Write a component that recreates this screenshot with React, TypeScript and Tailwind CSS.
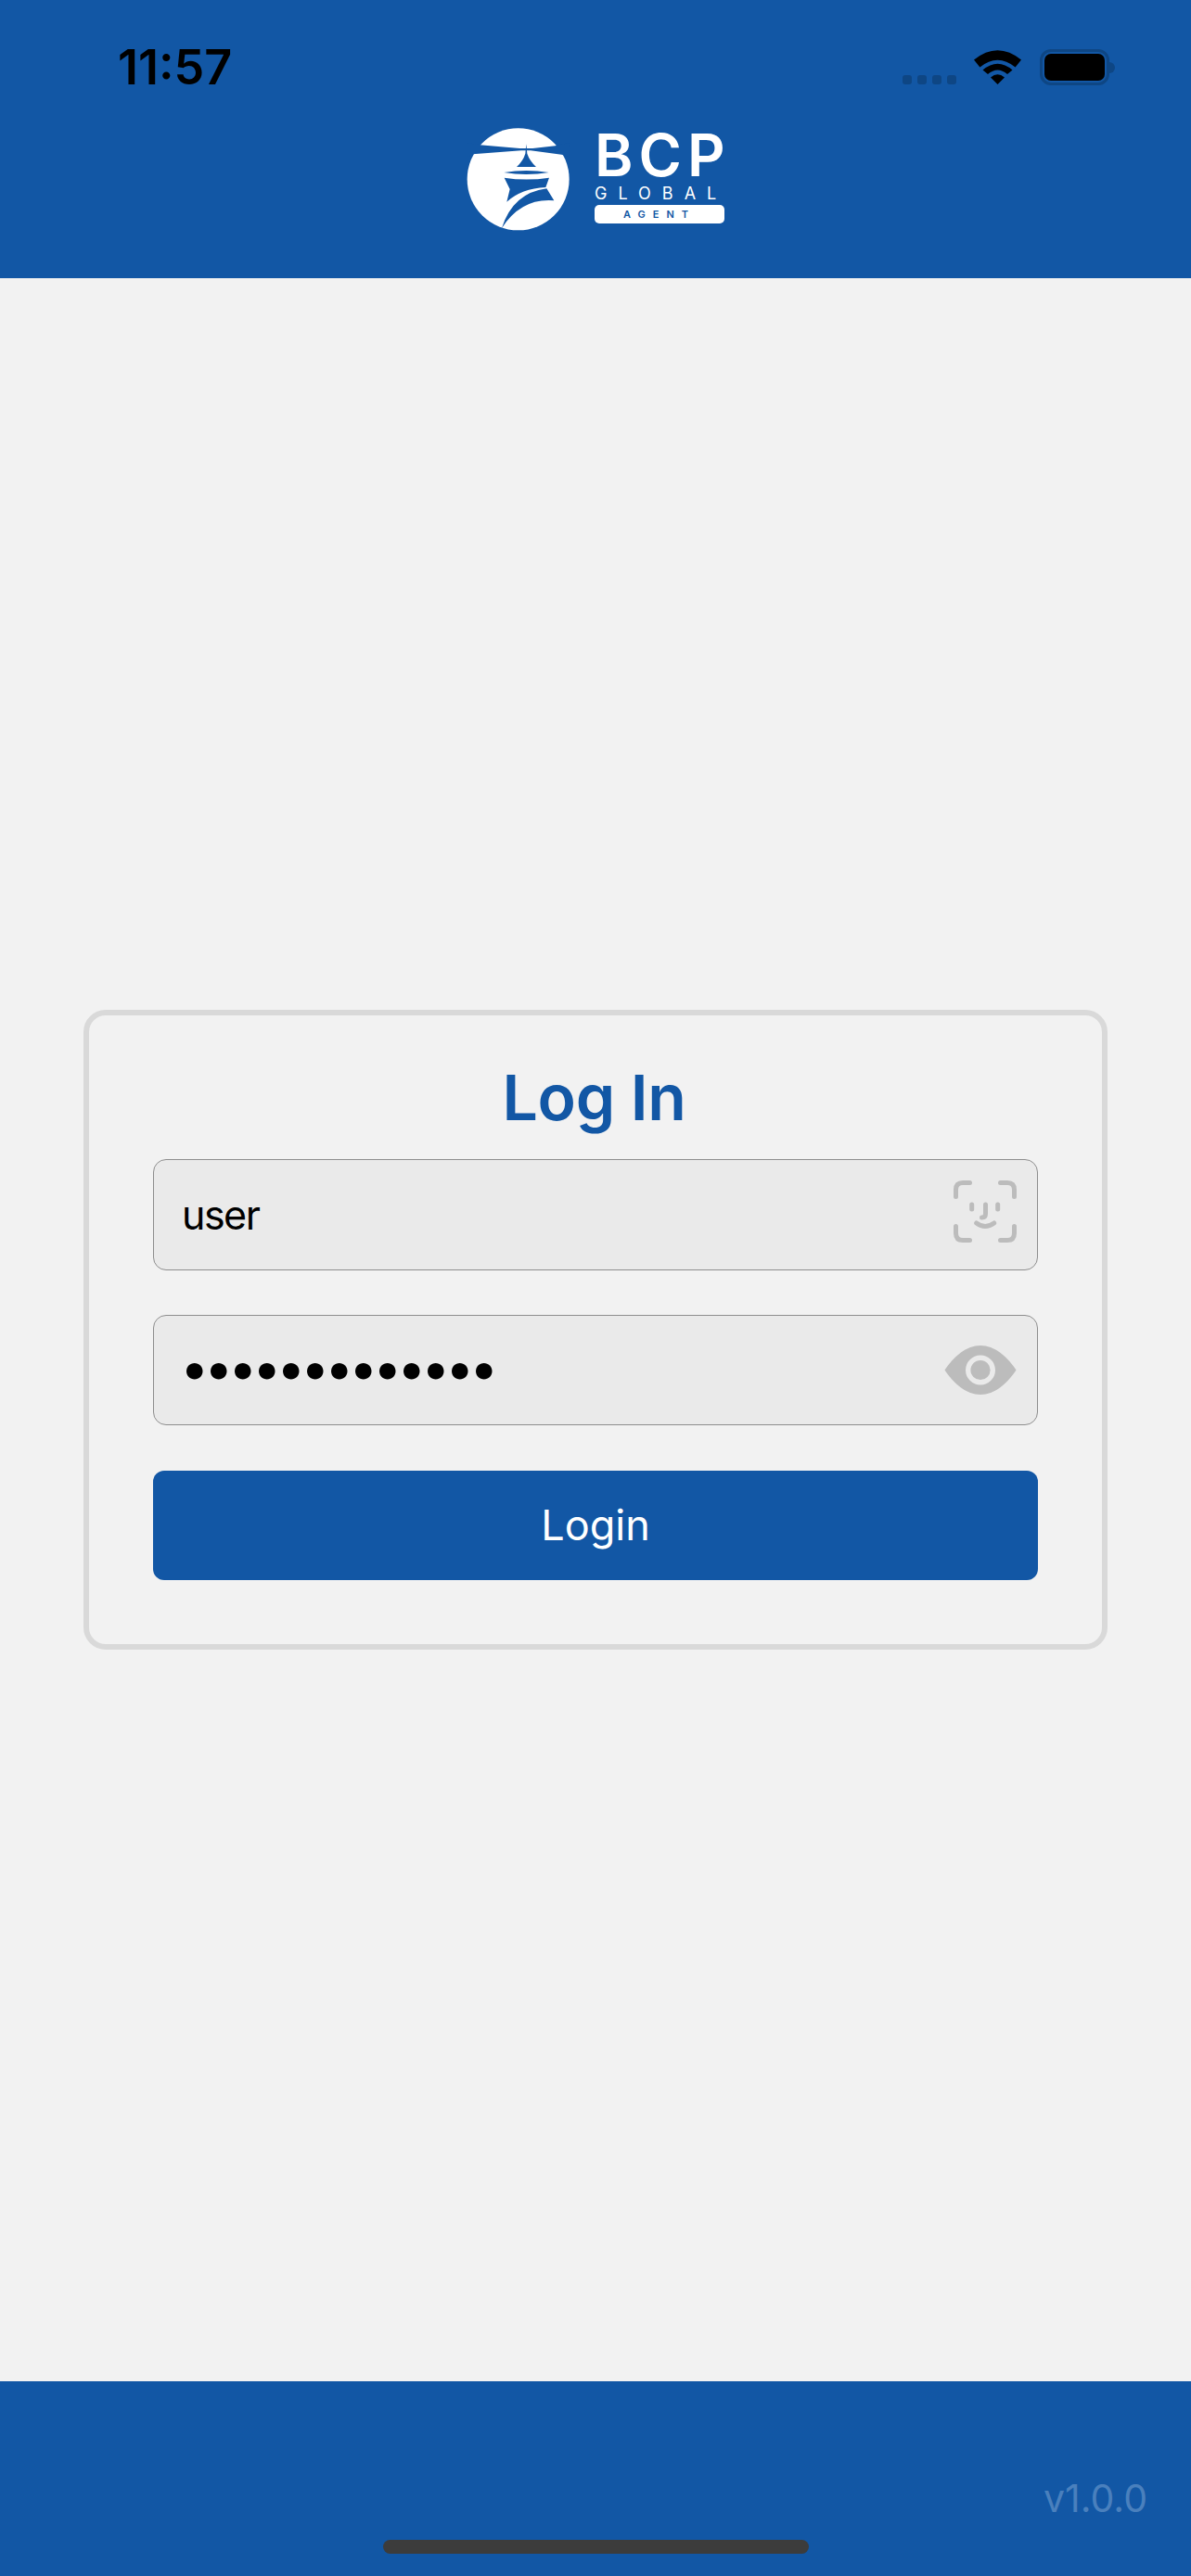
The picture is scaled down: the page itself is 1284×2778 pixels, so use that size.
import React from "react";

const LogoMark = () => (
  <svg width="120" height="120" viewBox="0 0 360 360" className="shrink-0">
    <circle cx="185" cy="178" r="165" fill="#ffffff" />
    {/* beam */}
    <path d="M20 60 L60 67 L190 78 L232 78 L305 70 L350 60 L350 106 L325 98 L225 85 L195 85 L38 97 L20 106 Z" fill="#1257a5" />
    {/* spire */}
    <path d="M211 64 L214 95 Q222 118 243 138 L180 138 Q201 118 208 95 Z" fill="#1257a5" />
    {/* lens */}
    <path d="M139 156 Q211 144 284 156 Q211 168 139 156 Z" fill="#1257a5" />
    {/* hull */}
    <path d="M140 173 Q212 184 285 173 L274 204 Q195 208 148 251 L158 210 Z" fill="#1257a5" />
    <path d="M277 208 L301 247 Q195 238 132 336 Q168 222 277 208 Z" fill="#1257a5" />
  </svg>
);

const FaceIdIcon = () => (
  <svg width="68" height="67" viewBox="0 0 68 67" fill="none" stroke="#bcbcbc" strokeWidth="5" strokeLinecap="round" strokeLinejoin="round">
    <path d="M2.5 17.5V10Q2.5 2.5 10 2.5H17.5" />
    <path d="M50.5 2.5H58Q65.5 2.5 65.5 10V17.5" />
    <path d="M2.5 49.5V57Q2.5 64.5 10 64.5H17.5" />
    <path d="M65.5 49.5V57Q65.5 64.5 58 64.5H50.5" />
    <path d="M19.7 26V31" />
    <path d="M47.7 26V31" />
    <path d="M34.5 26V36Q34.5 40 30.5 40" />
    <path d="M24.7 46Q34 53 43.7 46" />
  </svg>
);

const EyeIcon = () => (
  <svg width="78" height="53" viewBox="0 0 78 53">
    <path d="M0.5 26.5C10 12 24 0 39 0C54 0 68 12 77.5 26.5C68 41 54 53 39 53C24 53 10 41 0.5 26.5Z" fill="#bcbcbc" />
    <circle cx="39" cy="26.5" r="13.3" fill="#bcbcbc" stroke="#eaeaea" strokeWidth="5.4" />
  </svg>
);

const WifiIcon = () => (
  <svg width="51" height="37" viewBox="0 0 51 37" fill="#000000">
    <path d="M0 10.5Q25.5 -10 51 10.5L44.6 18.5Q25.5 3 6.4 18.5Z" />
    <path d="M9.5 21.5Q25.5 8 41.5 21.5L36 26Q25.5 17 15 26Z" />
    <path d="M18 29.5Q25.5 23 33 29.5L25.5 37Z" />
  </svg>
);

const StatusBar = () => (
  <div className="flex h-[138px] items-start justify-between pl-[127px] pr-[82px] pt-[43px]">
    <span className="text-[52px] leading-[60px] font-semibold text-black">11:57</span>
    <div className="mt-[10px] flex items-end">
      <div className="mb-px flex gap-[6px]">
        <span className="h-[10px] w-[10px] rounded-[3px] bg-[#0e4684]" />
        <span className="h-[10px] w-[10px] rounded-[3px] bg-[#0e4684]" />
        <span className="h-[10px] w-[10px] rounded-[3px] bg-[#0e4684]" />
        <span className="h-[10px] w-[10px] rounded-[3px] bg-[#0e4684]" />
      </div>
      <div className="ml-[19px] mb-px">
        <WifiIcon />
      </div>
      <div className="ml-[20px] flex items-center">
        <div className="flex h-[39px] w-[75px] rounded-[12px] border-[3px] border-[#0e4684] p-[2px]">
          <div className="flex-1 rounded-[7px] bg-black" />
        </div>
        <span className="h-[12px] w-[6px] rounded-r-full bg-[#0e4684]" />
      </div>
    </div>
  </div>
);

const Logo = () => (
  <div className="flex items-start justify-center pl-[4px]">
    <div className="-mt-[4px] -ml-[10px]">
      <LogoMark />
    </div>
    <div className="ml-[24px] flex w-[140px] flex-col text-white">
      <span className="mt-[-1px] h-[62px] text-[63px] leading-[60px] font-semibold tracking-[6px]">BCP</span>
      <span className="h-[21px] text-[18px] leading-[20px] tracking-[12px] whitespace-nowrap">GLOBAL</span>
      <div className="mt-[1px] flex h-[20px] items-center justify-center rounded-[5px] bg-white">
        <span className="text-[11px] leading-[20px] font-semibold tracking-[8px] text-[#1257a5]">AGENT</span>
      </div>
    </div>
  </div>
);

export default function App() {
  return (
    <div className="flex h-[2778px] w-[1284px] flex-col bg-[#f2f2f2] font-['Inter',sans-serif]">
      <header className="h-[300px] bg-[#1257a5]">
        <StatusBar />
        <Logo />
      </header>

      <main className="flex flex-1 items-center pl-[90px]">
        <div className="w-[1104px] rounded-[24px] border-[6px] border-[#d9d9d9] px-[69px] pb-[69px]">
          <h1 className="mt-[58px] mb-[37px] pr-[3px] text-center text-[68px] leading-[60px] font-semibold tracking-[-0.3px] text-[#1257a5]">Log In</h1>
          <div className="flex h-[120px] items-center justify-between rounded-[14px] border border-[#8e8e8e] bg-[#eaeaea] pl-[30px] pr-[22px]">
            <span className="text-[43px] tracking-[-1.5px] text-black">user</span>
            <div className="mb-[7px]">
              <FaceIdIcon />
            </div>
          </div>
          <div className="mt-[48px] flex h-[119px] items-center justify-between rounded-[14px] border border-[#8e8e8e] bg-[#eaeaea] pl-[28px] pr-[22px]">
            <span className="mb-[6px] text-[56px] tracking-[-5.5px] text-black">•••••••••••••</span>
            <EyeIcon />
          </div>
          <button className="mt-[49px] flex h-[118px] w-full items-center justify-center rounded-[12px] bg-[#1257a5] text-[45px] text-white">
            Login
          </button>
        </div>
      </main>

      <footer className="flex h-[210px] flex-col bg-[#1257a5]">
        <span className="mt-[101px] self-end pr-[47px] text-[41px] leading-[50px] text-[#4a80bd]">v1.0.0</span>
        <div className="mt-[20px] ml-[413px] h-[15px] w-[459px] rounded-full bg-[#3c3c3c]" />
      </footer>
    </div>
  );
}
